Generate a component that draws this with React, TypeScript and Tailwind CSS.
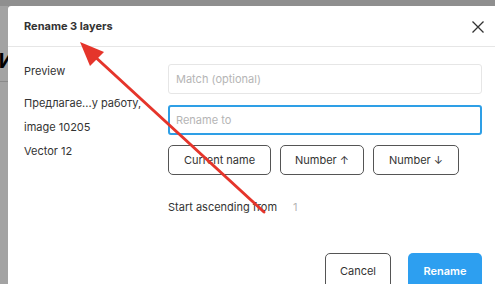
export default function App() {
    return (
        <div className="relative w-[495px] h-[284px] overflow-hidden bg-[#8f8f8f] font-['Inter',sans-serif]">
            <div className="flex h-full pt-[6px]">
                {/* page behind the modal */}
                <div className="w-[8px] shrink-0 bg-[#a3a3a3] overflow-hidden relative">
                    <div className="h-[76px] border-b border-[#8a8a8a] flex items-end justify-end pb-[10px]">
                        <span className="text-[20px] font-bold text-black leading-none mr-[-6px]">И</span>
                    </div>
                </div>

                {/* modal */}
                <div className="flex-1 bg-white rounded-tl-[3px] flex flex-col">
                    <div className="h-[41px] flex items-center justify-between pl-[16px] pr-[10px] border-b border-[#e6e6e6]">
                        <h2 className="text-[11px] font-bold text-[#333]">Rename 3 layers</h2>
                        <svg width="14" height="14" viewBox="0 0 14 14" className="mt-[1px]">
                            <path d="M1.5 1.5 L12.5 12.5 M12.5 1.5 L1.5 12.5" stroke="#333" strokeWidth="1.3" />
                        </svg>
                    </div>

                    <div className="flex flex-1 pl-[16px] pr-[13px]">
                        <div className="w-[144px] shrink-0 text-[11px] text-[#333] leading-[16px] pt-[16px]">
                            <div>Preview</div>
                            <div className="mt-[16px]">Предлагае...у работу,</div>
                            <div className="mt-[8px]">image 10205</div>
                            <div className="mt-[8px]">Vector 12</div>
                        </div>

                        <div className="flex-1 pt-[17px] flex flex-col">
                            <div className="h-[30px] border border-[#e6e6e6] rounded-[3px] flex items-center px-[7px] text-[11px] text-[#b5b5b5]">
                                Match (optional)
                            </div>
                            <div className="mt-[11px] h-[30px] border-2 border-[#2e9fe6] rounded-[3px] flex items-center px-[6px] text-[11px] text-[#b5b5b5]">
                                Rename to
                            </div>
                            <div className="mt-[10px] flex gap-[9px]">
                                <button className="h-[30px] w-[103px] border border-[#555] rounded-[5px] text-[11px] text-[#333]">
                                    Current name
                                </button>
                                <button className="h-[30px] w-[84px] border border-[#555] rounded-[5px] text-[11px] text-[#333]">
                                    Number ↑
                                </button>
                                <button className="h-[30px] w-[86px] border border-[#555] rounded-[5px] text-[11px] text-[#333]">
                                    Number ↓
                                </button>
                            </div>
                            <div className="mt-[24px] flex text-[11px] leading-[16px]">
                                <span className="text-[#333] w-[125px]">Start ascending from</span>
                                <span className="text-[#b5b5b5]">1</span>
                            </div>
                            <div className="mt-auto flex justify-end gap-[17px] translate-y-[5px]">
                                <button className="h-[36px] w-[66px] border border-[#555] rounded-[5px] text-[11px] text-[#333]">
                                    Cancel
                                </button>
                                <button className="h-[36px] w-[74px] bg-[#2d9ff0] rounded-[5px] text-[11px] font-semibold text-white">
                                    Rename
                                </button>
                            </div>
                        </div>
                    </div>
                </div>
            </div>

            {/* red annotation arrow */}
            <svg className="absolute inset-0 pointer-events-none" width="495" height="284">
                <line x1="264" y1="212" x2="92" y2="54" stroke="#e5352b" strokeWidth="3" strokeLinecap="round" />
                <polygon points="80,42 104,52 90,66" fill="#e5352b" />
            </svg>
        </div>
    );
}
